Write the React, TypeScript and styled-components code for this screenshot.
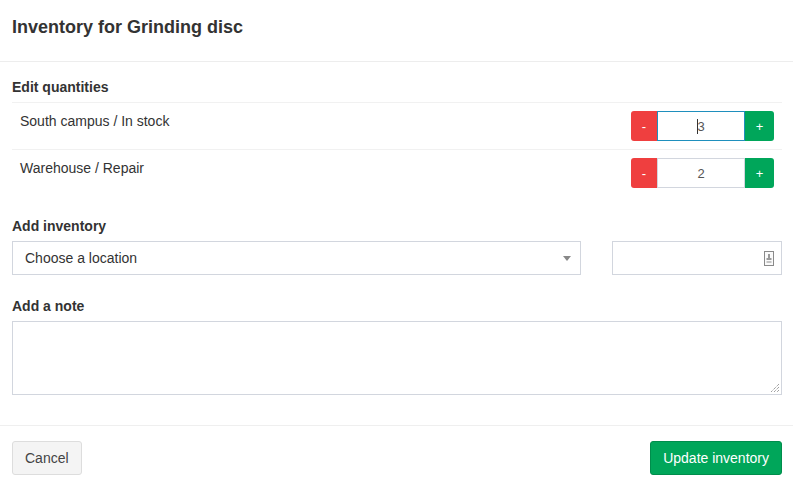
import styled, { createGlobalStyle } from 'styled-components'

const GlobalStyle = createGlobalStyle`
body {
    margin: 0;
    background: #fff;
    font-family: 'Liberation Sans', Arial, Helvetica, sans-serif;
    font-size: 14px;
    color: #333;
}
* { box-sizing: border-box; }
`

interface Stock {
    location: string
    quantity: number
    focused?: boolean
}

const stocks: Stock[] = [
    { location: 'South campus / In stock', quantity: 3, focused: true },
    { location: 'Warehouse / Repair', quantity: 2 },
]

export default function App (): JSX.Element {
    return <Modal>
        <GlobalStyle />
        <Header>
            <Title>Inventory for Grinding disc</Title>
        </Header>
        <Body>
            <Label>Edit quantities</Label>
            <StockList>
                {stocks.map((stock, index) => (
                    <StockRow key={index}>
                        <StockName>{stock.location}</StockName>
                        <QuantityGroup>
                            <StepButton $kind='minus'>-</StepButton>
                            <QuantityBox $focused={stock.focused}>
                                {stock.focused && <Caret />}
                                {stock.quantity}
                            </QuantityBox>
                            <StepButton $kind='plus'>+</StepButton>
                        </QuantityGroup>
                    </StockRow>
                ))}
            </StockList>

            <Label $top={20}>Add inventory</Label>
            <AddRow>
                <Select>
                    <span>Choose a location</span>
                    <Arrow />
                </Select>
                <NumberField>
                    <svg width='10' height='15' viewBox='0 0 10 15'>
                        <rect x='0.5' y='0.5' width='9' height='14' fill='#fafafa' stroke='#8a8a8a' />
                        <rect x='4' y='3' width='2' height='4' fill='#9a9a9a' />
                        <rect x='2.5' y='7' width='5' height='2' fill='#9a9a9a' />
                        <rect x='2.5' y='10' width='5' height='2' fill='#c4c4c4' />
                    </svg>
                </NumberField>
            </AddRow>

            <Label $top={21}>Add a note</Label>
            <NoteArea>
                <svg width='10' height='10' viewBox='0 0 10 10'>
                    <path d='M9 1 L1 9 M9 4 L4 9 M9 7 L7 9' stroke='#777' strokeWidth='1' strokeDasharray='1 1' />
                </svg>
            </NoteArea>
        </Body>
        <Footer>
            <CancelButton>Cancel</CancelButton>
            <SubmitButton>Update inventory</SubmitButton>
        </Footer>
    </Modal>
}

const Modal = styled.div`
width: 793px;
height: 484px;
background: #fff;
display: flex;
flex-direction: column;
`

const Header = styled.div`
padding: 13px 12px 20px;
border-bottom: 1px solid #ededed;
`

const Title = styled.h4`
margin: 0;
font-size: 18px;
line-height: 28px;
font-weight: 700;
color: #333;
`

const Body = styled.div`
padding: 15px 11px 30px 12px;
border-bottom: 1px solid #efefef;
`

const Label = styled.div<{ $top?: number }>`
font-weight: 700;
font-size: 14px;
line-height: 20px;
margin-top: ${p => p.$top ?? 0}px;
margin-bottom: 5px;
`

const StockList = styled.div`
border-top: 1px solid #f1f1f1;
`

const StockRow = styled.div`
display: flex;
justify-content: space-between;
align-items: flex-start;
padding: 8px 8px;
border-bottom: 1px solid #f1f1f1;
&:last-child { border-bottom: none; }
`

const StockName = styled.div`
line-height: 20px;
`

const QuantityGroup = styled.div`
display: flex;
height: 30px;
`

const StepButton = styled.div<{ $kind: 'minus' | 'plus' }>`
width: ${p => p.$kind === 'minus' ? 26 : 29}px;
display: flex;
align-items: center;
justify-content: center;
color: #fff;
font-size: 13px;
background: ${p => p.$kind === 'minus' ? '#ef3f3f' : '#00a65a'};
border-radius: ${p => p.$kind === 'minus' ? '3px 0 0 3px' : '0 3px 3px 0'};
`

const QuantityBox = styled.div<{ $focused?: boolean }>`
width: 88px;
display: flex;
align-items: center;
justify-content: center;
font-size: 13px;
color: #555;
border: 1px solid ${p => p.$focused ? '#1f8fbd' : '#d2d6de'};
`

const Caret = styled.span`
display: inline-block;
width: 1px;
height: 15px;
background: #333;
margin-right: -1px;
`

const AddRow = styled.div`
display: flex;
gap: 31px;
`

const Select = styled.div`
flex: 1;
height: 34px;
border: 1px solid #d2d6de;
display: flex;
align-items: center;
justify-content: space-between;
padding: 0 9px 0 12px;
color: #333;
`

const Arrow = styled.span`
width: 0;
height: 0;
border-left: 4px solid transparent;
border-right: 4px solid transparent;
border-top: 5px solid #888;
`

const NumberField = styled.div`
width: 170px;
height: 34px;
border: 1px solid #d2d6de;
display: flex;
align-items: center;
justify-content: flex-end;
padding-right: 7px;
`

const NoteArea = styled.div`
height: 74px;
border: 1px solid #d2d6de;
display: flex;
align-items: flex-end;
justify-content: flex-end;
padding: 0 1px 1px 0;
`

const Footer = styled.div`
display: flex;
justify-content: space-between;
padding: 15px 11px 15px 12px;
`

const BaseButton = styled.div`
height: 34px;
display: flex;
align-items: center;
padding: 0 12px;
border-radius: 3px;
font-size: 14px;
border: 1px solid transparent;
`

const CancelButton = styled(BaseButton)`
background: #f4f4f4;
border-color: #ddd;
color: #444;
`

const SubmitButton = styled(BaseButton)`
background: #00a65a;
border-color: #008d4c;
color: #fff;
`
